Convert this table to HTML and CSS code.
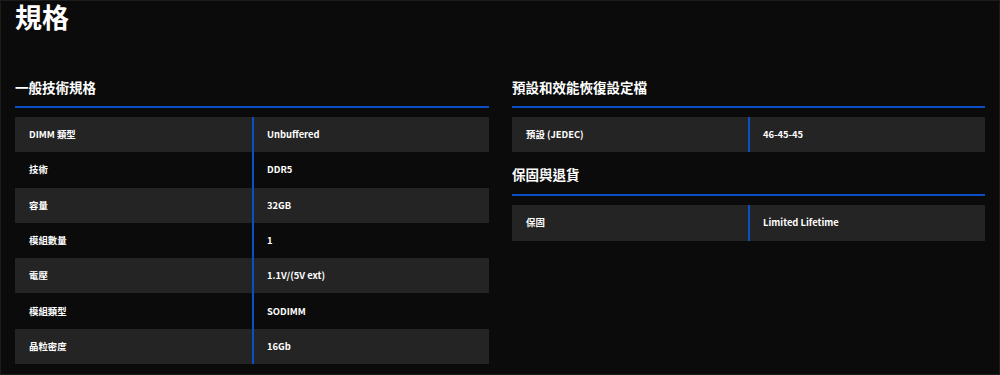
FILE: index.html
```html
<!DOCTYPE html>
<html lang="zh-Hant">
<head>
<meta charset="utf-8">
<title>規格</title>
<link rel="stylesheet" href="styles.css">
</head>
<body>
<div class="page">
  <h1 class="title">規格</h1>
  <div class="columns">
    <section class="col">
      <h3 class="sec-head">一般技術規格</h3>
      <div class="table">
        <div class="row"><div class="cell label">DIMM 類型</div><div class="cell value">Unbuffered</div></div>
        <div class="row"><div class="cell label">技術</div><div class="cell value">DDR5</div></div>
        <div class="row"><div class="cell label">容量</div><div class="cell value">32GB</div></div>
        <div class="row"><div class="cell label">模組數量</div><div class="cell value">1</div></div>
        <div class="row"><div class="cell label">電壓</div><div class="cell value">1.1V/(5V ext)</div></div>
        <div class="row"><div class="cell label">模組類型</div><div class="cell value">SODIMM</div></div>
        <div class="row"><div class="cell label">晶粒密度</div><div class="cell value">16Gb</div></div>
      </div>
    </section>
    <section class="col">
      <h3 class="sec-head">預設和效能恢復設定檔</h3>
      <div class="table">
        <div class="row"><div class="cell label">預設 (JEDEC)</div><div class="cell value">46-45-45</div></div>
      </div>
      <h3 class="sec-head sec-next">保固與退貨</h3>
      <div class="table">
        <div class="row"><div class="cell label">保固</div><div class="cell value">Limited Lifetime</div></div>
      </div>
    </section>
  </div>
</div>
</body>
</html>
```

FILE: styles.css
```css
* { box-sizing: border-box; }
html, body {
  margin: 0;
  padding: 0;
  background: #0b0b0b;
}
body {
  font-family: "Noto Sans CJK TC", "Noto Sans", sans-serif;
  color: #ffffff;
}
.page {
  width: 1000px;
  height: 375px;
  overflow: hidden;
  border: 1px solid #1c1c1c;
  padding: 0 14px;
}
.title {
  margin: 0;
  font-size: 27px;
  line-height: 32px;
  font-weight: 700;
}
.columns {
  display: flex;
  gap: 23px;
  margin-top: 44px;
}
.col {
  width: 474px;
}
.col:last-child {
  width: 473px;
}
.sec-head {
  margin: 0 0 9px 0;
  font-size: 13.5px;
  line-height: 20px;
  font-weight: 700;
  padding-bottom: 9px;
  border-bottom: 2px solid #0a4fc6;
}
.sec-next {
  margin-top: 12px;
  padding-bottom: 10px;
}
.table {
  display: flex;
  flex-direction: column;
}
.row {
  display: grid;
  grid-template-columns: 237px 1fr;
  height: 35.3px;
}
.col:last-child .row {
  grid-template-columns: 236px 1fr;
}
.row:nth-child(odd) {
  background: #242424;
}
.cell {
  display: flex;
  align-items: center;
  padding: 0 14px;
  font-size: 9.4px;
  font-weight: 700;
  line-height: 15px;
}
.value {
  border-left: 2px solid #0a4fc6;
  padding-left: 13px;
}
```
